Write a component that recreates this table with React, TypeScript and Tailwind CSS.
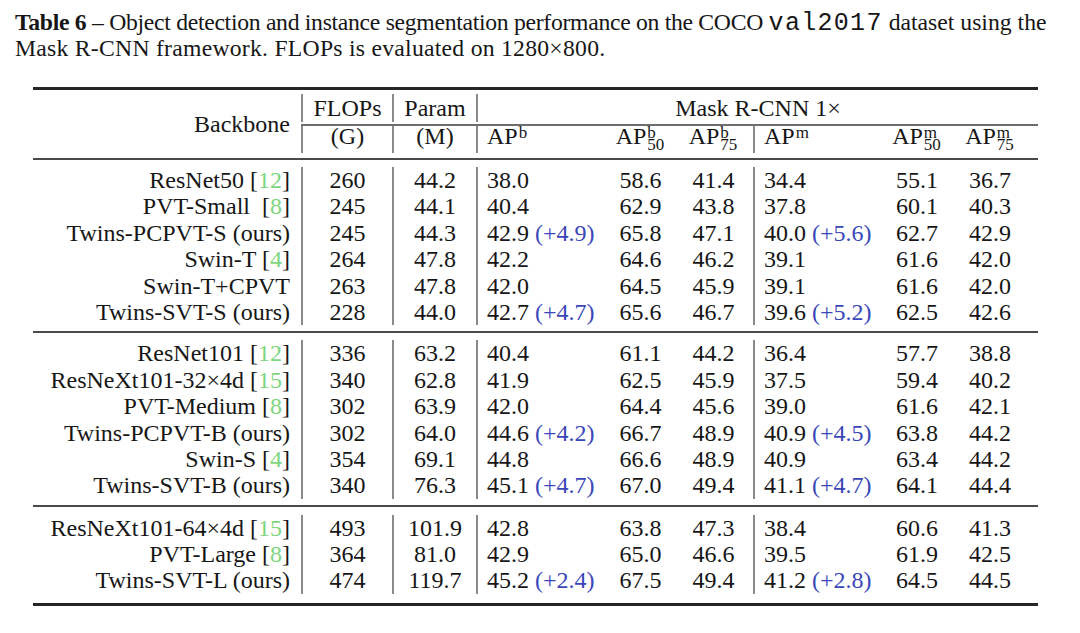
import React from "react";

type R = {
  n: string;
  c?: string;
  sp?: boolean;
  f: string;
  p: string;
  b: string;
  bd?: string;
  b50: string;
  b75: string;
  m: string;
  md?: string;
  m50: string;
  m75: string;
};

const g1: R[] = [
  { n: "ResNet50", c: "12", f: "260", p: "44.2", b: "38.0", b50: "58.6", b75: "41.4", m: "34.4", m50: "55.1", m75: "36.7" },
  { n: "PVT-Small", c: "8", sp: true, f: "245", p: "44.1", b: "40.4", b50: "62.9", b75: "43.8", m: "37.8", m50: "60.1", m75: "40.3" },
  { n: "Twins-PCPVT-S (ours)", f: "245", p: "44.3", b: "42.9", bd: "(+4.9)", b50: "65.8", b75: "47.1", m: "40.0", md: "(+5.6)", m50: "62.7", m75: "42.9" },
  { n: "Swin-T", c: "4", f: "264", p: "47.8", b: "42.2", b50: "64.6", b75: "46.2", m: "39.1", m50: "61.6", m75: "42.0" },
  { n: "Swin-T+CPVT", f: "263", p: "47.8", b: "42.0", b50: "64.5", b75: "45.9", m: "39.1", m50: "61.6", m75: "42.0" },
  { n: "Twins-SVT-S (ours)", f: "228", p: "44.0", b: "42.7", bd: "(+4.7)", b50: "65.6", b75: "46.7", m: "39.6", md: "(+5.2)", m50: "62.5", m75: "42.6" },
];

const g2: R[] = [
  { n: "ResNet101", c: "12", f: "336", p: "63.2", b: "40.4", b50: "61.1", b75: "44.2", m: "36.4", m50: "57.7", m75: "38.8" },
  { n: "ResNeXt101-32×4d", c: "15", f: "340", p: "62.8", b: "41.9", b50: "62.5", b75: "45.9", m: "37.5", m50: "59.4", m75: "40.2" },
  { n: "PVT-Medium", c: "8", f: "302", p: "63.9", b: "42.0", b50: "64.4", b75: "45.6", m: "39.0", m50: "61.6", m75: "42.1" },
  { n: "Twins-PCPVT-B (ours)", f: "302", p: "64.0", b: "44.6", bd: "(+4.2)", b50: "66.7", b75: "48.9", m: "40.9", md: "(+4.5)", m50: "63.8", m75: "44.2" },
  { n: "Swin-S", c: "4", f: "354", p: "69.1", b: "44.8", b50: "66.6", b75: "48.9", m: "40.9", m50: "63.4", m75: "44.2" },
  { n: "Twins-SVT-B (ours)", f: "340", p: "76.3", b: "45.1", bd: "(+4.7)", b50: "67.0", b75: "49.4", m: "41.1", md: "(+4.7)", m50: "64.1", m75: "44.4" },
];

const g3: R[] = [
  { n: "ResNeXt101-64×4d", c: "15", f: "493", p: "101.9", b: "42.8", b50: "63.8", b75: "47.3", m: "38.4", m50: "60.6", m75: "41.3" },
  { n: "PVT-Large", c: "8", f: "364", p: "81.0", b: "42.9", b50: "65.0", b75: "46.6", m: "39.5", m50: "61.9", m75: "42.5" },
  { n: "Twins-SVT-L (ours)", f: "474", p: "119.7", b: "45.2", bd: "(+2.4)", b50: "67.5", b75: "49.4", m: "41.2", md: "(+2.8)", m50: "64.5", m75: "44.5" },
];

function Name({ r }: { r: R }) {
  return (
    <>
      {r.n}
      {r.c && (
        <>
          {r.sp ? "\u00a0 " : " "}[<span className="text-[#7ed67e]">{r.c}</span>]
        </>
      )}
    </>
  );
}

function Scripts({ sup, sub, wide }: { sup: string; sub?: string; wide: string }) {
  return (
    <span className={`relative inline-block h-0 ${wide}`}>
      <span className="absolute left-[1px] bottom-[5.4px] text-[17px] leading-[12px]">{sup}</span>
      {sub && (
        <span className="absolute left-[1px] top-[-5px] text-[17px] leading-[12px]">{sub}</span>
      )}
    </span>
  );
}

function Delta({ v }: { v?: string }) {
  if (!v) return null;
  return <span className="text-[#3a47b8]"> {v}</span>;
}

function Row({ r }: { r: R }) {
  return (
    <div className="flex h-[26.4px] leading-[26.4px] whitespace-nowrap">
      <div className="w-[268px] text-right pr-[11px]">
        <Name r={r} />
      </div>
      <div className="w-[91px] border-l-2 border-[#8a8a8a] text-center">{r.f}</div>
      <div className="w-[84px] border-l-2 border-[#8a8a8a] text-center">{r.p}</div>
      <div className="w-[131px] border-l-2 border-[#8a8a8a] pl-[9px]">
        {r.b}
        <Delta v={r.bd} />
      </div>
      <div className="w-[67px] text-center">{r.b50}</div>
      <div className="w-[79px] text-center">{r.b75}</div>
      <div className="w-[127px] border-l-2 border-[#8a8a8a] pl-[9px]">
        {r.m}
        <Delta v={r.md} />
      </div>
      <div className="w-[74px] text-center">{r.m50}</div>
      <div className="w-[72px] text-center">{r.m75}</div>
    </div>
  );
}

function Group({ rows, last }: { rows: R[]; last?: boolean }) {
  return (
    <div className={last ? "pt-[8px] pb-[9px]" : "pt-[7px] pb-[6px]"}>
      {rows.map((r) => (
        <Row key={r.n} r={r} />
      ))}
    </div>
  );
}

export default function App() {
  return (
    <div className="w-[1080px] h-[633px] bg-white text-[#161616] font-['Liberation_Serif',serif] overflow-hidden">
      <div className="pl-[15px] pt-[10px] text-[23.7px] leading-[25px] whitespace-nowrap">
        <div>
          <span className="tracking-[-0.3px]">
            <b>Table 6</b> – Object detection and instance segmentation performance on the COCO{" "}
          </span>
          <span className="font-['Liberation_Mono',monospace] text-[25px] tracking-[1.3px]">val2017</span> dataset
          using the
        </div>
        <div className="tracking-[0.25px]">Mask R-CNN framework. FLOPs is evaluated on 1280×800.</div>
      </div>

      <div className="ml-[33px] mt-[26px] w-[1005px] text-[24px]">
        <div className="h-[3px] bg-[#262626]" />
        {/* header */}
        <div className="flex whitespace-nowrap">
          <div className="w-[268px] flex items-center justify-end pr-[11px]">Backbone</div>
          <div className="flex-1 flex flex-col">
            <div className="flex h-[34px] pt-[4px] pb-[2px] leading-[28px]">
              <div className="w-[91px] border-l-2 border-[#8a8a8a] text-center">FLOPs</div>
              <div className="w-[84px] border-l-2 border-[#8a8a8a] text-center">Param</div>
              <div className="flex-1 border-l-2 border-[#8a8a8a] text-center">Mask R-CNN 1×</div>
            </div>
            <div className="h-[2px] bg-[#6e6e6e]" />
            <div className="flex h-[32px] pb-[5px] leading-[20px]">
              <div className="w-[91px] border-l-2 border-[#8a8a8a] text-center">(G)</div>
              <div className="w-[84px] border-l-2 border-[#8a8a8a] text-center">(M)</div>
              <div className="w-[131px] border-l-2 border-[#8a8a8a] pl-[9px]">
                AP<Scripts sup="b" wide="w-[10px]" />
              </div>
              <div className="w-[67px] text-center">
                AP<Scripts sup="b" sub="50" wide="w-[19px]" />
              </div>
              <div className="w-[79px] text-center">
                AP<Scripts sup="b" sub="75" wide="w-[19px]" />
              </div>
              <div className="w-[127px] border-l-2 border-[#8a8a8a] pl-[9px]">
                AP<Scripts sup="m" wide="w-[15px]" />
              </div>
              <div className="w-[74px] text-center">
                AP<Scripts sup="m" sub="50" wide="w-[19px]" />
              </div>
              <div className="w-[72px] text-center">
                AP<Scripts sup="m" sub="75" wide="w-[19px]" />
              </div>
            </div>
          </div>
        </div>
        <div className="h-[2px] bg-[#4a4a4a]" />
        <Group rows={g1} />
        <div className="h-[2px] bg-[#4a4a4a]" />
        <Group rows={g2} />
        <div className="h-[2px] bg-[#4a4a4a]" />
        <Group rows={g3} last />
        <div className="h-[3px] bg-[#262626]" />
      </div>
    </div>
  );
}
